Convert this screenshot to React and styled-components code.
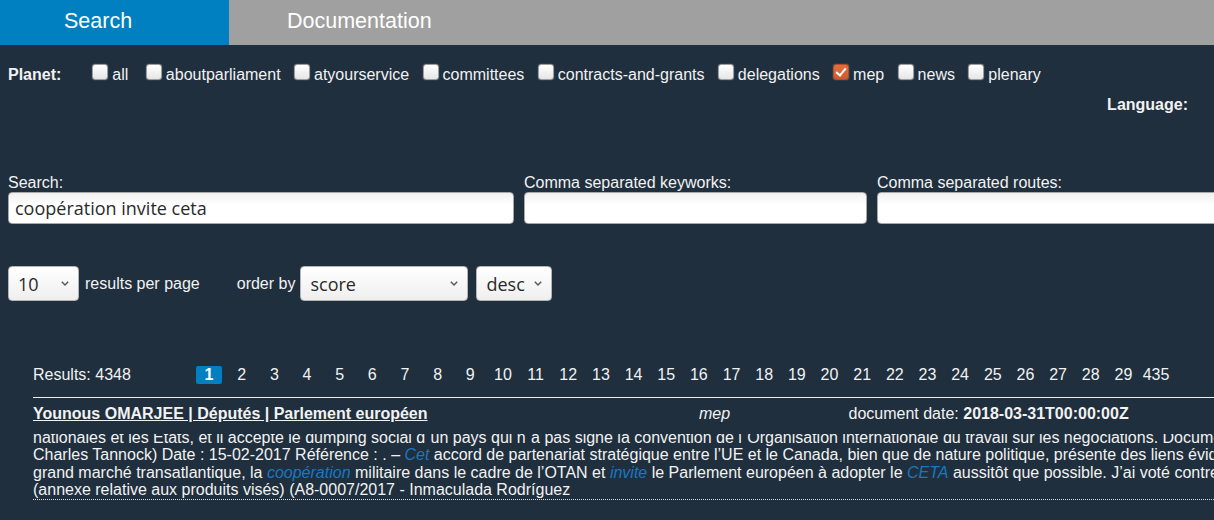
import React from 'react'
import styled, { createGlobalStyle } from 'styled-components'

const GlobalStyle = createGlobalStyle`
  html, body {
    margin: 0;
    padding: 0;
    background: #1f2f3e;
    overflow: hidden;
  }
`;

const Page = styled.div`
  width: 100vw;
  min-height: 520px;
  overflow: hidden;
  background: #1f2f3e;
  color: #f2f2f2;
  font-family: "Liberation Sans", Arial, sans-serif;
  font-size: 16px;
`;

const TabBar = styled.div`
  display: flex;
  height: 45px;
  background: #a0a0a0;
`;

const Tab = styled.div`
  box-sizing: border-box;
  width: ${p => p.$width}px;
  padding-left: ${p => p.$pad}px;
  line-height: 43px;
  font-size: 21.5px;
  color: #fff;
  background: ${p => (p.$active ? '#0080c0' : 'transparent')};
`;

const Form = styled.div`
  padding: 0 8px;
`;

const PlanetRow = styled.div`
  display: flex;
  align-items: baseline;
  padding-top: 19px;
  line-height: 20px;
  white-space: nowrap;
`;

const Bold = styled.span`
  font-weight: bold;
  margin-right: ${p => p.$mr || 0}px;
`;

const Option = styled.label`
  display: flex;
  align-items: baseline;
  margin-right: ${p => p.$mr || 13.4}px;
`;

const Check = styled.input.attrs({ type: 'checkbox' })`
  appearance: none;
  position: relative;
  box-sizing: border-box;
  width: 16px;
  height: 16px;
  margin: 0 4px 0 0;
  border: 1px solid #9c9c9c;
  border-radius: 3px;
  background: linear-gradient(#ffffff, #e6e6e6);
  box-shadow: 0 0 1px rgba(255, 255, 255, 0.6);

  &:checked {
    background: linear-gradient(#e2703f, #cc5a2c);
    border-color: #b44e26;
  }

  &:checked::after {
    content: '';
    position: absolute;
    left: 4px;
    top: 1px;
    width: 4px;
    height: 8px;
    border: solid #fff;
    border-width: 0 2.5px 2.5px 0;
    transform: rotate(40deg);
  }
`;

const LanguageRow = styled.div`
  display: flex;
  justify-content: flex-end;
  margin-top: 10px;
  padding-right: 18px;
  line-height: 20px;
`;

const Fields = styled.div`
  display: flex;
  gap: 10px;
  margin-top: 58px;
`;

const Field = styled.div`
  flex: 0 0 ${p => p.$width}px;
  display: flex;
  flex-direction: column;
`;

const FieldLabel = styled.label`
  line-height: 19px;
`;

const TextInput = styled.input`
  box-sizing: border-box;
  height: 32px;
  width: 100%;
  padding: 0 6px;
  border: 1px solid #a8a8a8;
  border-radius: 4px;
  background: linear-gradient(#f1f1f1, #ffffff 40%);
  font-family: "Open Sans", "DejaVu Sans", sans-serif;
  font-size: 18px;
  color: #2a2a2a;
  outline: none;
`;

const Controls = styled.div`
  display: flex;
  align-items: center;
  margin-top: 42px;
  white-space: nowrap;
`;

const SelectWrap = styled.div`
  position: relative;
  width: ${p => p.$width}px;
  margin-left: ${p => p.$ml || 0}px;
`;

const Select = styled.select`
  appearance: none;
  box-sizing: border-box;
  width: 100%;
  height: 35px;
  padding: 0 0 0 9px;
  border: 1px solid #b4b4b4;
  border-radius: 4px;
  background: linear-gradient(#ffffff, #efefef);
  font-family: "Open Sans", "DejaVu Sans", sans-serif;
  font-size: 18px;
  color: #2a2a2a;
  outline: none;
`;

const Chevron = styled.svg`
  position: absolute;
  right: 10px;
  top: 15px;
  pointer-events: none;
`;

const Caption = styled.span`
  margin-left: ${p => p.$ml || 0}px;
`;

const Results = styled.div`
  padding-left: 33px;
  margin-top: 65px;
`;

const ResultsBar = styled.div`
  display: grid;
  grid-template-columns: 159.7px repeat(30, 32.67px);
  justify-items: center;
  line-height: 18px;
  white-space: nowrap;
  padding-bottom: 13px;
  border-bottom: 1px solid #eeeeee;
`;

const Count = styled.span`
  justify-self: start;
`;

const PageLink = styled.a`
  text-decoration: none;
  line-height: 17px;
  padding: 0 8.5px;
  border-radius: 2px;
  font-weight: ${p => (p.$active ? 'bold' : 'normal')};
  background: ${p => (p.$active ? '#0080c0' : 'transparent')};
  color: ${p => (p.$active ? '#ffffff' : '#f2f2f2')};
`;

const HitHead = styled.div`
  display: grid;
  grid-template-columns: 666px 149.5px auto;
  margin-top: 6px;
  line-height: 19px;
  white-space: nowrap;
`;

const HitTitle = styled.a`
  font-weight: bold;
  color: #f2f2f2;
  text-decoration: underline;
  justify-self: start;
`;

const Planet = styled.span`
  font-style: italic;
`;

const Snippet = styled.div`
  height: 65px;
  margin-top: 11px;
  overflow: hidden;
  border-bottom: 1px dotted #dddddd;
`;

const SnippetText = styled.div`
  margin-top: -5px;
  line-height: 17.25px;
  white-space: nowrap;
`;

const Mark = styled.em`
  color: #1b78c0;
`;

const planets = [
  ['all', false, 17.5],
  ['aboutparliament', false],
  ['atyourservice', false],
  ['committees', false],
  ['contracts-and-grants', false],
  ['delegations', false],
  ['mep', true],
  ['news', false],
  ['plenary', false],
];

const pages = [...Array.from({ length: 29 }, (_, i) => String(i + 1)), '435'];

const Down = () => (
  <Chevron width="8" height="5" viewBox="0 0 8 5">
    <polyline points="0.8,0.8 4,4 7.2,0.8" fill="none" stroke="#555" strokeWidth="1.4" />
  </Chevron>
);

const App = () => {
  return (
    <Page>
      <GlobalStyle />
      <TabBar>
        <Tab $active $width={229} $pad={64}>Search</Tab>
        <Tab $pad={58}>Documentation</Tab>
      </TabBar>

      <Form>
        <PlanetRow>
          <Bold $mr={31}>Planet:</Bold>
          {planets.map(([name, on, mr]) => (
            <Option key={name} $mr={mr}>
              <Check defaultChecked={on} />
              {name}
            </Option>
          ))}
        </PlanetRow>

        <LanguageRow>
          <Bold>Language:</Bold>
        </LanguageRow>

        <Fields>
          <Field $width={506}>
            <FieldLabel>Search:</FieldLabel>
            <TextInput defaultValue="coopération invite ceta" />
          </Field>
          <Field $width={343}>
            <FieldLabel>Comma separated keyworks:</FieldLabel>
            <TextInput />
          </Field>
          <Field $width={420}>
            <FieldLabel>Comma separated routes:</FieldLabel>
            <TextInput />
          </Field>
        </Fields>

        <Controls>
          <SelectWrap $width={71}>
            <Select defaultValue="10">
              <option>10</option>
              <option>20</option>
              <option>50</option>
            </Select>
            <Down />
          </SelectWrap>
          <Caption $ml={6}>results per page</Caption>
          <Caption $ml={37}>order by</Caption>
          <SelectWrap $width={168} $ml={5}>
            <Select defaultValue="score">
              <option>score</option>
              <option>date</option>
            </Select>
            <Down />
          </SelectWrap>
          <SelectWrap $width={76} $ml={8}>
            <Select defaultValue="desc">
              <option>desc</option>
              <option>asc</option>
            </Select>
            <Down />
          </SelectWrap>
        </Controls>
      </Form>

      <Results>
        <ResultsBar>
          <Count>Results: 4348</Count>
          {pages.map((n, i) => (
            <PageLink key={n} href="#" $active={i === 0}>{n}</PageLink>
          ))}
        </ResultsBar>

        <HitHead>
          <HitTitle href="#">Younous OMARJEE | Députés | Parlement européen</HitTitle>
          <Planet>mep</Planet>
          <span>document date: <b>2018-03-31T00:00:00Z</b></span>
        </HitHead>

        <Snippet>
          <SnippetText>
            <div>nationales et les Etats, et il accepte le dumping social d´un pays qui n´a pas signé la convention de l´Organisation internationale du travail sur les négociations. Documents</div>
            <div>Charles Tannock) Date : 15-02-2017 Référence : . – <Mark>Cet</Mark> accord de partenariat stratégique entre l’UE et le Canada, bien que de nature politique, présente des liens évidents avec</div>
            <div>grand marché transatlantique, la <Mark>coopération</Mark> militaire dans le cadre de l’OTAN et <Mark>invite</Mark> le Parlement européen à adopter le <Mark>CETA</Mark> aussitôt que possible. J’ai voté contre ce</div>
            <div>(annexe relative aux produits visés) (A8-0007/2017 - Inmaculada Rodríguez</div>
          </SnippetText>
        </Snippet>
      </Results>
    </Page>
  )
}

export default App
